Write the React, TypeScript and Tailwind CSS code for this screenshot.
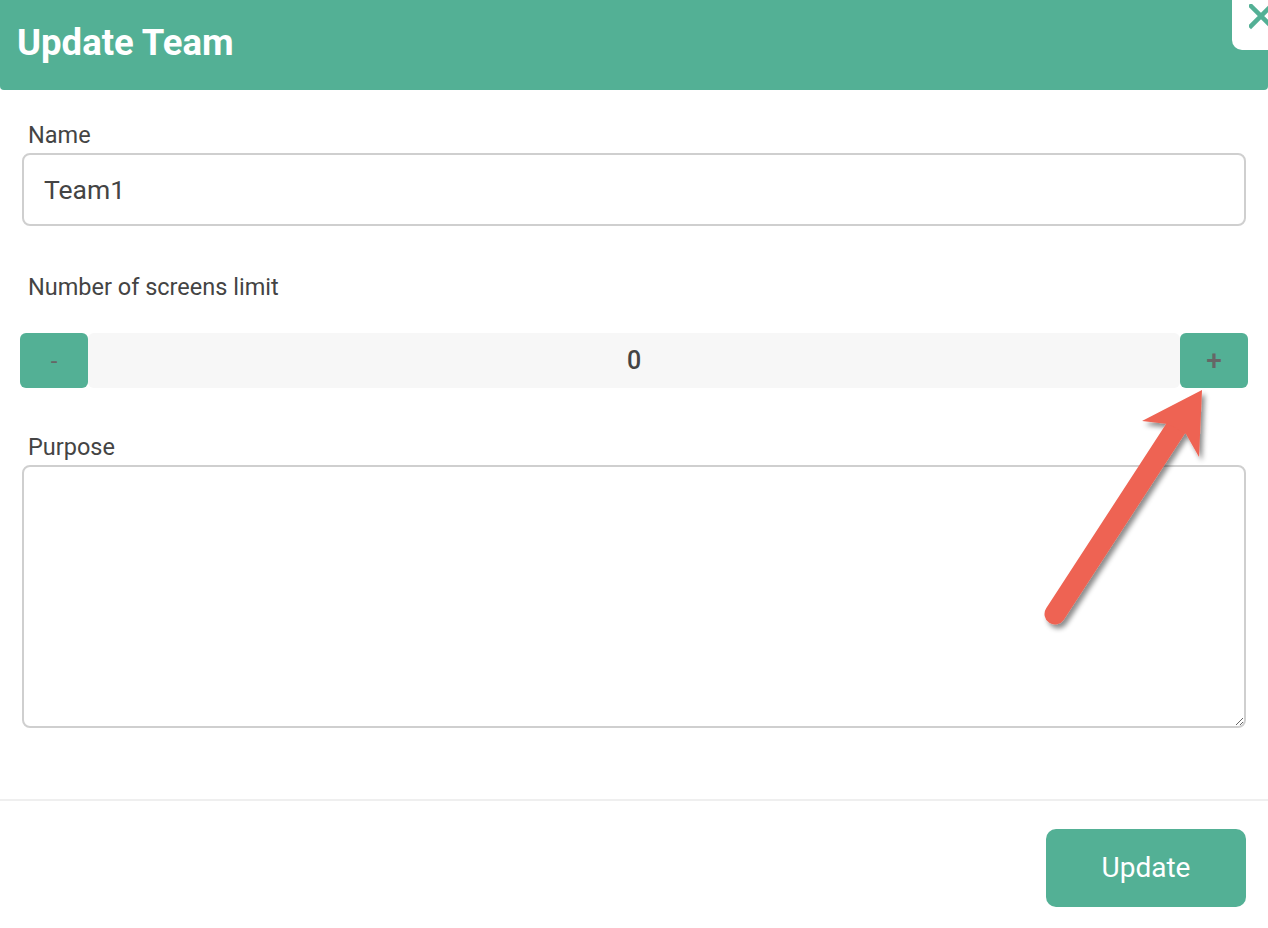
import React from "react";

export default function App() {
  return (
    <div className="relative w-[1268px] h-[928px] bg-white overflow-hidden" style={{ fontFamily: "Roboto, 'Liberation Sans', sans-serif" }}>
      <div className="h-[90px] bg-[#53b095] rounded-b-[4px] flex items-center pl-[17px] pb-[4px]">
        <h1 className="text-[36.5px] font-bold text-white leading-none">Update Team</h1>
      </div>
      <div className="absolute top-0 left-[1232px] w-[60px] h-[50px] bg-white rounded-bl-[10px] overflow-hidden">
        <svg width="40" height="30" viewBox="0 0 40 30" className="absolute left-[17px] top-[4px]">
          <path d="M2 2 L22 22 M22 2 L2 22" stroke="#53b095" strokeWidth="4.5" strokeLinecap="square" />
        </svg>
      </div>

      <div className="px-[22px] pt-[33px] text-[#444]">
        <label className="block text-[23.5px] leading-[24px] pl-[6px]">Name</label>
        <div className="mt-[6px] h-[73px] border-2 border-[#cfcfcf] rounded-[8px] flex items-center px-[20px]">
          <span className="text-[26.5px] text-[#444]">Team1</span>
        </div>

        <label className="block mt-[49px] text-[23.5px] leading-[24px] pl-[6px]">Number of screens limit</label>
        <div className="mt-[34px] -mx-[2px] flex h-[55px] w-[1228px]">
          <button className="w-[68px] h-full bg-[#53b095] rounded-[6px] text-[#666] text-[24px] leading-none flex items-center justify-center">-</button>
          <div className="flex-1 bg-[#f7f7f7] rounded-[6px] flex items-center justify-center text-[25px] font-medium text-[#444]">0</div>
          <button className="w-[68px] h-full bg-[#53b095] rounded-[6px] text-[#666] text-[28px] font-medium leading-none flex items-center justify-center">+</button>
        </div>

        <label className="block mt-[47px] text-[23.5px] leading-[24px] pl-[6px]">Purpose</label>
        <textarea className="mt-[6px] block w-full h-[263px] border-2 border-[#cfcfcf] rounded-[8px] outline-none" />
      </div>

      <div className="mt-[71px] h-[2px] bg-[#efefef]" />

      <div className="flex justify-end pr-[22px] pt-[28px]">
        <button className="w-[200px] h-[78px] bg-[#53b095] rounded-[10px] text-white text-[28px]">Update</button>
      </div>

      <svg className="absolute left-0 top-0 pointer-events-none" width="1268" height="928" viewBox="0 0 1268 928">
        <defs>
          <filter id="sh" x="-20%" y="-20%" width="140%" height="140%">
            <feDropShadow dx="3" dy="4" stdDeviation="2.5" floodColor="#000" floodOpacity="0.45" />
          </filter>
        </defs>
        <g filter="url(#sh)" fill="#ee6352">
          <line x1="1055" y1="614" x2="1176" y2="428" stroke="#ee6352" strokeWidth="21" strokeLinecap="round" />
          <polygon points="1202,390 1142,421 1168,424 1186,434 1199,457" />
        </g>
      </svg>
    </div>
  );
}
